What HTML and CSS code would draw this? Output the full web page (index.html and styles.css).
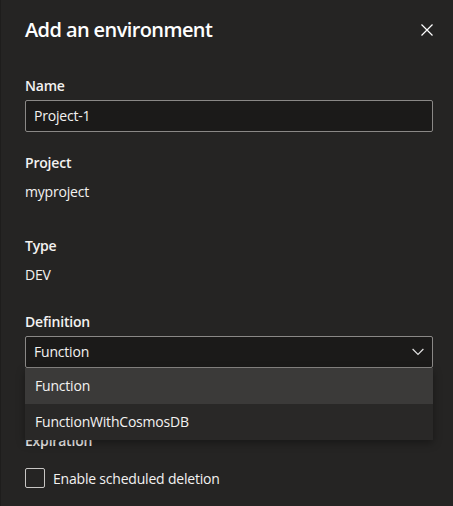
FILE: index.html
```html
<!DOCTYPE html>
<html>
<head>
<meta charset="utf-8">
<link rel="stylesheet" href="styles.css">
</head>
<body>
<div class="panel">
  <div class="header">
    <h1 class="title">Add an environment</h1>
    <button class="close" aria-label="Close">
      <svg width="12" height="12" viewBox="0 0 12 12"><path d="M0.5 0.5 L11.5 11.5 M11.5 0.5 L0.5 11.5" stroke="#ffffff" stroke-width="1.2" fill="none"/></svg>
    </button>
  </div>

  <div class="field f-name">
    <div class="label">Name</div>
    <div class="input">Project-1</div>
  </div>

  <div class="field f-project">
    <div class="label">Project</div>
    <div class="value">myproject</div>
  </div>

  <div class="field f-type">
    <div class="label">Type</div>
    <div class="value">DEV</div>
  </div>

  <div class="field f-def">
    <div class="label">Definition</div>
    <div class="dropdown-wrap">
      <div class="input select">
        <span>Function</span>
        <svg width="12" height="8" viewBox="0 0 12 8"><path d="M0.6 1 L6 6.4 L11.4 1" stroke="#e0e0e0" stroke-width="1.2" fill="none"/></svg>
      </div>
      <div class="menu">
        <div class="option selected">Function</div>
        <div class="option">FunctionWithCosmosDB</div>
      </div>
    </div>
  </div>

  <div class="field f-exp">
    <div class="label">Expiration</div>
    <label class="check">
      <span class="box"></span>
      <span>Enable scheduled deletion</span>
    </label>
  </div>
</div>
</body>
</html>
```
FILE: styles.css
```css
html, body {
  margin: 0;
  padding: 0;
}
body {
  width: 453px;
  height: 506px;
  overflow: hidden;
  background: #252423;
  font-family: "Open Sans", "Noto Sans", sans-serif;
  color: #ffffff;
  font-size: 14px;
}
.panel {
  height: 506px;
  box-sizing: border-box;
  border-left: 1px solid #1e1d1c;
  padding: 14px 20px 0 24px;
}
.header {
  display: flex;
  align-items: center;
  justify-content: space-between;
  height: 32px;
}
.title {
  margin: 0;
  font-size: 20px;
  font-weight: 600;
  line-height: 32px;
  letter-spacing: -0.6px;
}
.close {
  background: none;
  border: 0;
  padding: 0;
  width: 12px;
  height: 12px;
  display: flex;
}
.label {
  font-weight: 600;
  line-height: 20px;
  height: 20px;
  color: #f3f2f1;
  letter-spacing: -0.2px;
}
.value {
  line-height: 20px;
  color: #f3f2f1;
  letter-spacing: -0.2px;
}
.f-name { margin-top: 30px; }
.f-name .label { margin-bottom: 4px; }
.input {
  height: 32px;
  box-sizing: border-box;
  border: 1px solid #8a8886;
  border-radius: 2px;
  background: #1b1a19;
  padding: 0 8px;
  line-height: 30px;
  color: #f3f2f1;
  letter-spacing: -0.2px;
}
.f-project { margin-top: 21px; }
.f-project .value { margin-top: 9px; }
.f-type { margin-top: 34px; }
.f-type .value { margin-top: 9px; }
.f-def { margin-top: 27px; }
.f-def .label { margin-bottom: 4px; }
.dropdown-wrap { position: relative; }
.select {
  display: flex;
  align-items: center;
  justify-content: space-between;
  padding-right: 8px;
}
.menu {
  position: absolute;
  left: 0;
  right: 0;
  top: 32px;
  background: #292827;
  box-shadow: 0 3px 8px rgba(0,0,0,0.35);
  z-index: 2;
}
.option {
  height: 36px;
  line-height: 36px;
  padding: 0 10px;
  color: #f3f2f1;
  letter-spacing: -0.2px;
}
.option.selected { background: #3b3a39; }
.f-exp { margin-top: 63px; }
.check {
  display: flex;
  align-items: center;
  gap: 8px;
  margin-top: 17px;
  color: #f3f2f1;
  letter-spacing: -0.2px;
}
.box {
  width: 20px;
  height: 20px;
  box-sizing: border-box;
  border: 1px solid #c8c6c4;
  border-radius: 2px;
}
```
